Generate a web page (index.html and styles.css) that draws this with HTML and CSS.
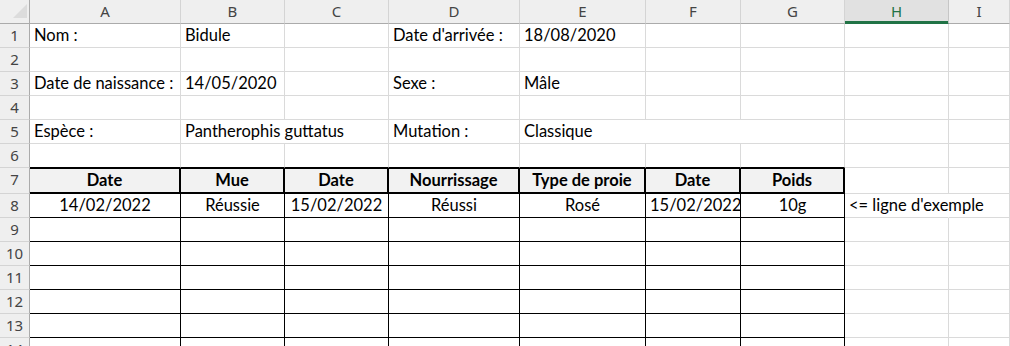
FILE: index.html
```html
<!DOCTYPE html>
<html lang="fr">
<head>
    <meta charset="UTF-8">
    <meta name="viewport" content="width=device-width, initial-scale=1.0">
    <title>Fiche serpent</title>
    <link rel="stylesheet" href="styles.css">
</head>
<body>

    <div class="sheet">
        <!-- Column headers -->
        <div class="corner"><span class="select-all"></span></div>
        <div class="col-head">A</div>
        <div class="col-head">B</div>
        <div class="col-head">C</div>
        <div class="col-head">D</div>
        <div class="col-head">E</div>
        <div class="col-head">F</div>
        <div class="col-head">G</div>
        <div class="col-head active">H</div>
        <div class="col-head">I</div>

        <!-- Identity block -->
        <div class="row-head">1</div>
        <div class="cell">Nom :</div>
        <div class="cell">Bidule</div>
        <div class="cell"></div>
        <div class="cell">Date d'arrivée :</div>
        <div class="cell">18/08/2020</div>
        <div class="cell"></div>
        <div class="cell"></div>
        <div class="cell"></div>
        <div class="cell"></div>

        <div class="row-head">2</div>
        <div class="cell"></div>
        <div class="cell"></div>
        <div class="cell"></div>
        <div class="cell"></div>
        <div class="cell"></div>
        <div class="cell"></div>
        <div class="cell"></div>
        <div class="cell"></div>
        <div class="cell"></div>

        <div class="row-head">3</div>
        <div class="cell">Date de naissance :</div>
        <div class="cell">14/05/2020</div>
        <div class="cell"></div>
        <div class="cell">Sexe :</div>
        <div class="cell">Mâle</div>
        <div class="cell"></div>
        <div class="cell"></div>
        <div class="cell"></div>
        <div class="cell"></div>

        <div class="row-head">4</div>
        <div class="cell"></div>
        <div class="cell"></div>
        <div class="cell"></div>
        <div class="cell"></div>
        <div class="cell"></div>
        <div class="cell"></div>
        <div class="cell"></div>
        <div class="cell"></div>
        <div class="cell"></div>

        <div class="row-head">5</div>
        <div class="cell">Espèce :</div>
        <div class="cell span-2">Pantherophis guttatus</div>
        <div class="cell">Mutation :</div>
        <div class="cell span-3">Classique</div>
        <div class="cell"></div>
        <div class="cell"></div>

        <div class="row-head">6</div>
        <div class="cell above-table"></div>
        <div class="cell above-table"></div>
        <div class="cell above-table"></div>
        <div class="cell above-table"></div>
        <div class="cell above-table"></div>
        <div class="cell above-table"></div>
        <div class="cell above-table"></div>
        <div class="cell"></div>
        <div class="cell"></div>

        <!-- Follow-up table -->
        <div class="row-head">7</div>
        <div class="cell th">Date</div>
        <div class="cell th">Mue</div>
        <div class="cell th">Date</div>
        <div class="cell th">Nourrissage</div>
        <div class="cell th">Type de proie</div>
        <div class="cell th">Date</div>
        <div class="cell th">Poids</div>
        <div class="cell"></div>
        <div class="cell"></div>

        <div class="row-head">8</div>
        <div class="cell td">14/02/2022</div>
        <div class="cell td">Réussie</div>
        <div class="cell td">15/02/2022</div>
        <div class="cell td">Réussi</div>
        <div class="cell td">Rosé</div>
        <div class="cell td">15/02/2022</div>
        <div class="cell td">10g</div>
        <div class="cell spill">&lt;= ligne d'exemple</div>
        <div class="cell"></div>

        <!-- Empty rows to fill in -->
        <script>
            for (let r = 9; r <= 14; r++) {
                let row = `<div class="row-head">${r}</div>`;
                for (let c = 0; c < 7; c++) {
                    row += '<div class="cell td"></div>';
                }
                row += '<div class="cell"></div><div class="cell"></div>';
                document.write(row);
            }
        </script>
    </div>

</body>
</html>
```

FILE: styles.css
```css
/* Basic Reset */
* {
    margin: 0;
    padding: 0;
    box-sizing: border-box;
}

body {
    background: #ffffff;
    color: #000000;
    font-family: 'Lato', 'Liberation Sans', sans-serif;
    overflow: hidden;
}

/* Sheet grid: row header column + columns A to I */
.sheet {
    display: grid;
    grid-template-columns: 30px 151px 104px 104px 131px 126px 95px 104px 104px 1fr;
    grid-template-rows: repeat(7, 24px) 26px repeat(7, 24px);
}

/* Headers */
.corner,
.col-head,
.row-head {
    background: #efefef;
    color: #444444;
    font-family: 'Noto Sans', 'Open Sans', sans-serif;
    font-size: 15px;
    line-height: 23px;
    text-align: center;
}

.corner {
    border-right: 1px solid #ababab;
    border-bottom: 1px solid #ababab;
    display: flex;
    justify-content: flex-end;
    align-items: flex-end;
    padding: 0 2px 5px 0;
}

    .corner .select-all {
        width: 14px;
        height: 14px;
        background: #dcdcdc;
        clip-path: polygon(100% 0, 100% 100%, 0 100%);
    }

.col-head {
    border-right: 1px solid #d4d4d4;
    border-bottom: 1px solid #ababab;
}

    .col-head.active {
        background: #e1e1e1;
        color: #217346;
        border-right-color: #c6c6c6;
        border-bottom-color: #217346;
        box-shadow: inset 0 -2px 0 #217346; /* Selected column marker */
    }

.row-head {
    border-right: 1px solid #ababab;
    border-bottom: 1px solid #d4d4d4;
}

/* Cells */
.cell {
    border-right: 1px solid #dadada;
    border-bottom: 1px solid #dadada;
    font-size: 16.5px;
    line-height: 23px;
    padding: 0 4px;
    white-space: nowrap;
    overflow: visible;
}

.span-2 {
    grid-column: span 2;
}

.span-3 {
    grid-column: span 3;
}

/* Text spilling into the next empty cell */
.spill {
    border-right-color: transparent;
}

.above-table {
    border-bottom-color: #000000;
}

.th {
    background: #f2f2f2;
    font-weight: bold;
    text-align: center;
    border-top: 1px solid #000000;
    border-right: 2px solid #000000;
    border-bottom: 2px solid #000000;
}

.td {
    text-align: center;
    border-right-color: #000000;
    border-bottom-color: #000000;
}
```
